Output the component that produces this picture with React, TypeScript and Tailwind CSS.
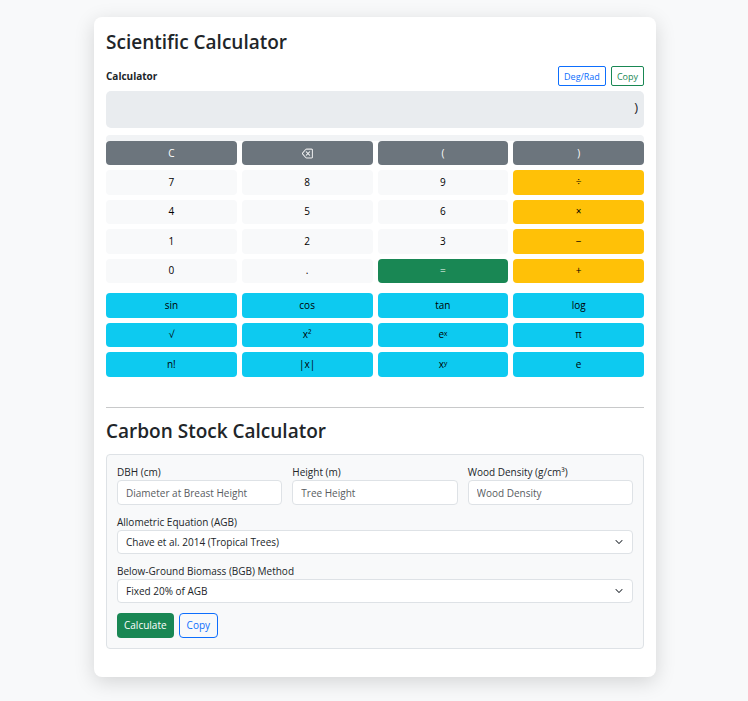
import { useState } from 'react';
import clsx from 'clsx';
import { BsBackspace, BsChevronDown } from 'react-icons/bs';

type Variant = 'gray' | 'light' | 'warning' | 'success' | 'info';

interface Key {
  label: string;
  variant: Variant;
}

const variants: Record<Variant, string> = {
  gray: 'bg-[#6c757d] text-white',
  light: 'bg-[#f8f9fa] text-black',
  warning: 'bg-[#ffc107] text-black',
  success: 'bg-[#198754] text-white',
  info: 'bg-[#0dcaf0] text-black',
};

const mainKeys: Key[] = [
  { label: 'C', variant: 'gray' },
  { label: 'back', variant: 'gray' },
  { label: '(', variant: 'gray' },
  { label: ')', variant: 'gray' },
  { label: '7', variant: 'light' },
  { label: '8', variant: 'light' },
  { label: '9', variant: 'light' },
  { label: '÷', variant: 'warning' },
  { label: '4', variant: 'light' },
  { label: '5', variant: 'light' },
  { label: '6', variant: 'light' },
  { label: '×', variant: 'warning' },
  { label: '1', variant: 'light' },
  { label: '2', variant: 'light' },
  { label: '3', variant: 'light' },
  { label: '−', variant: 'warning' },
  { label: '0', variant: 'light' },
  { label: '.', variant: 'light' },
  { label: '=', variant: 'success' },
  { label: '+', variant: 'warning' },
];

const functionKeys = ['sin', 'cos', 'tan', 'log', '√', 'x²', 'eˣ', 'π', 'n!', '|x|', 'xʸ', 'e'];

const treeFields = [
  { id: 'dbh', label: 'DBH (cm)', placeholder: 'Diameter at Breast Height' },
  { id: 'height', label: 'Height (m)', placeholder: 'Tree Height' },
  { id: 'density', label: 'Wood Density (g/cm³)', placeholder: 'Wood Density' },
];

function CalcKey({ label, variant, onPress }: Key & { onPress: (key: string) => void }) {
  return (
    <button
      type="button"
      aria-label={label === 'back' ? 'Backspace' : undefined}
      onClick={() => onPress(label)}
      className={clsx('flex items-center justify-center rounded', variants[variant])}
    >
      {label === 'back' ? <BsBackspace className="h-[11px] w-[11px]" strokeWidth={0.4} /> : label}
    </button>
  );
}

function SelectField({ id, label, options }: { id: string; label: string; options: string[] }) {
  return (
    <div>
      <label htmlFor={id} className="block">{label}</label>
      <div className="relative">
        <select
          id={id}
          className="block h-6 w-full appearance-none rounded border border-[#dee2e6] bg-white px-2 leading-[15px]"
        >
          {options.map(option => (
            <option key={option}>{option}</option>
          ))}
        </select>
        <BsChevronDown
          className="pointer-events-none absolute top-2 right-2.5 h-2 w-2 text-[#343a40]"
          strokeWidth={1}
        />
      </div>
    </div>
  );
}

export default function App() {
  const [display, setDisplay] = useState(')');

  const handleKey = (key: string) => {
    if (key === 'C') setDisplay('');
    else if (key === 'back') setDisplay(display.slice(0, -1));
    else if (key !== '=') setDisplay(display + key);
  };

  return (
    <div className="min-h-screen bg-[#f8f9fa] py-[17px] pl-0.5 font-['Open_Sans',sans-serif] text-[10px] leading-[15px] text-[#212529]">
      <main className="mx-auto max-w-[562px] rounded-lg bg-white px-3 pt-3 pb-7 shadow-[0_5px_20px_rgba(0,0,0,0.15)]">
        <h1 className="mb-[11px] text-[19px] leading-[26px] font-semibold">Scientific Calculator</h1>

        {/* Display */}
        <div className="mb-[5px] flex items-center justify-between">
          <label htmlFor="display" className="font-bold">Calculator</label>
          <div className="flex gap-[5px] text-[9px]">
            <button type="button" className="h-5 rounded-xs border border-[#0d6efd] px-[5px] text-[#0d6efd]">
              Deg/Rad
            </button>
            <button type="button" className="h-5 rounded-xs border border-[#198754] px-[5px] text-[#198754]">
              Copy
            </button>
          </div>
        </div>
        <input
          id="display"
          readOnly
          value={display}
          className="block h-[37px] w-full rounded-[5px] bg-[#e9ecef] px-1.5 pb-1.5 text-right text-[13px]"
        />
        <div className="mt-[7px] h-1.5 rounded-t bg-[#f1f3f5]" />

        {/* Keypad */}
        <div className="grid h-[142px] grid-cols-4 grid-rows-5 gap-[5px]">
          {mainKeys.map(key => (
            <CalcKey key={key.label} {...key} onPress={handleKey} />
          ))}
        </div>
        <div className="mt-2.5 grid h-[84px] grid-cols-4 grid-rows-3 gap-[5px]">
          {functionKeys.map(label => (
            <CalcKey key={label} label={label} variant="info" onPress={handleKey} />
          ))}
        </div>

        <hr className="mt-[30px] mb-2.5 border-[#c8c9ca]" />

        {/* Carbon stock form */}
        <h2 className="mb-2.5 text-[19px] leading-[26px] font-semibold">Carbon Stock Calculator</h2>
        <form className="flex flex-col gap-2.5 rounded border border-[#dee2e6] bg-[#f8f9fa] p-2.5">
          <div className="grid grid-cols-3 gap-2.5">
            {treeFields.map(field => (
              <div key={field.id}>
                <label htmlFor={field.id} className="block">{field.label}</label>
                <input
                  id={field.id}
                  placeholder={field.placeholder}
                  className="block h-[25px] w-full rounded border border-[#dee2e6] bg-white px-2 placeholder:text-[#595c5f]"
                />
              </div>
            ))}
          </div>
          <SelectField
            id="agb"
            label="Allometric Equation (AGB)"
            options={['Chave et al. 2014 (Tropical Trees)']}
          />
          <SelectField
            id="bgb"
            label="Below-Ground Biomass (BGB) Method"
            options={['Fixed 20% of AGB']}
          />
          <div className="flex gap-[5px]">
            <button type="button" className="h-[25px] rounded bg-[#198754] px-[7px] text-white">
              Calculate
            </button>
            <button type="button" className="h-[25px] rounded border border-[#0d6efd] px-[7px] text-[#0d6efd]">
              Copy
            </button>
          </div>
        </form>
      </main>
    </div>
  );
}
